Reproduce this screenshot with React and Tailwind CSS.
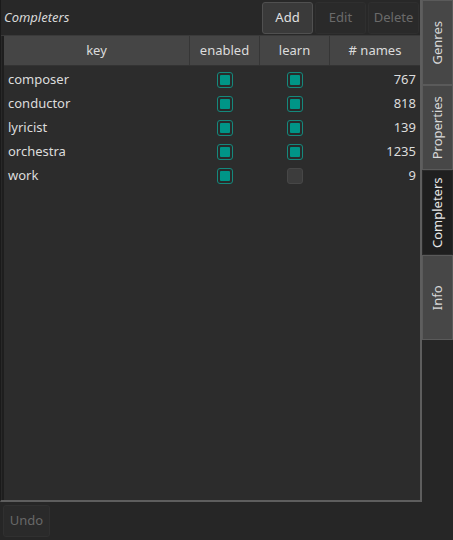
const rows = [
  { key: "composer", enabled: true, learn: true, names: 767 },
  { key: "conductor", enabled: true, learn: true, names: 818 },
  { key: "lyricist", enabled: true, learn: true, names: 139 },
  { key: "orchestra", enabled: true, learn: true, names: 1235 },
  { key: "work", enabled: true, learn: false, names: 9 },
];

const tabs = ["Genres", "Properties", "Completers", "Info"];

function Check({ on }) {
  return on ? (
    <div className="w-[16px] h-[16px] rounded-[3px] border border-[#14897d] bg-[#2a2a2a] p-[2px]">
      <div className="w-full h-full rounded-[1px] bg-[#009587]" />
    </div>
  ) : (
    <div className="w-[16px] h-[16px] rounded-[3px] border border-[#474747] bg-[#3c3c3c]" />
  );
}

function ToolButton({ label, disabled }) {
  return (
    <button
      className={`h-[32px] w-[51px] rounded-[3px] border text-[13px] ${
        disabled
          ? "border-[#2f2f2f] bg-[#2a2a2a] text-[#6a6a6a]"
          : "border-[#505050] bg-[#3a3a3a] text-[#e0e0e0]"
      }`}
    >
      {label}
    </button>
  );
}

export default function App() {
  return (
    <div
      className="w-[453px] h-[540px] bg-[#262626] flex text-[13px] text-[#dcdcdc] overflow-hidden"
      style={{ fontFamily: '"Noto Sans", "Open Sans", sans-serif' }}
    >
      <div className="flex flex-col w-[422px]">
        {/* panel */}
        <div className="h-[502px] flex flex-col border-l border-[#1a1a1a] border-r-2 border-b-2 border-r-[#5e5e5e] border-b-[#5e5e5e] bg-[#282828]">
          <div className="h-[36px] flex items-center pl-[3px] pr-[1px] gap-[2px] border-b border-[#3a3a3a]">
            <span className="italic text-[13px] text-[#d8d8d8] flex-1">Completers</span>
            <ToolButton label="Add" />
            <ToolButton label="Edit" disabled />
            <ToolButton label="Delete" disabled />
          </div>
          <div className="flex-1 flex flex-col ml-[1px] border-l-2 border-[#1e1e1e] bg-[#2c2c2c]">
            <div className="h-[30px] flex bg-[#454545] border-b border-[#333]">
              <div className="w-[186px] flex items-center justify-center border-r border-[#363636]">key</div>
              <div className="w-[70px] flex items-center justify-center border-r border-[#363636]">enabled</div>
              <div className="w-[70px] flex items-center justify-center border-r border-[#363636]">learn</div>
              <div className="flex-1 flex items-center justify-center"># names</div>
            </div>
            <div className="pt-[2px]">
              {rows.map((r) => (
                <div key={r.key} className="h-[24px] flex items-center">
                  <div className="w-[186px] pl-[4px]">{r.key}</div>
                  <div className="w-[70px] flex justify-center">
                    <Check on={r.enabled} />
                  </div>
                  <div className="w-[70px] flex justify-center">
                    <Check on={r.learn} />
                  </div>
                  <div className="flex-1 text-right pr-[4px]">{r.names}</div>
                </div>
              ))}
            </div>
          </div>
        </div>
        <div className="pt-[3px] pl-[3px]">
          <button className="h-[32px] w-[47px] rounded-[3px] border border-[#303030] bg-[#2a2a2a] text-[13px] text-[#686868]">
            Undo
          </button>
        </div>
      </div>
      {/* vertical tabs */}
      <div className="flex flex-col w-[31px]">
        {tabs.map((t) => {
          const active = t === "Completers";
          return (
            <div
              key={t}
              className={`h-[85px] flex items-center justify-center border ${
                active
                  ? "bg-[#1f1f1f] border-[#2a2a2a] text-[#e8e8e8]"
                  : "bg-[#474747] border-[#5a5a5a] text-[#d8d8d8]"
              }`}
            >
              <span className="-rotate-90 whitespace-nowrap text-[13px]">{t}</span>
            </div>
          );
        })}
      </div>
    </div>
  );
}
